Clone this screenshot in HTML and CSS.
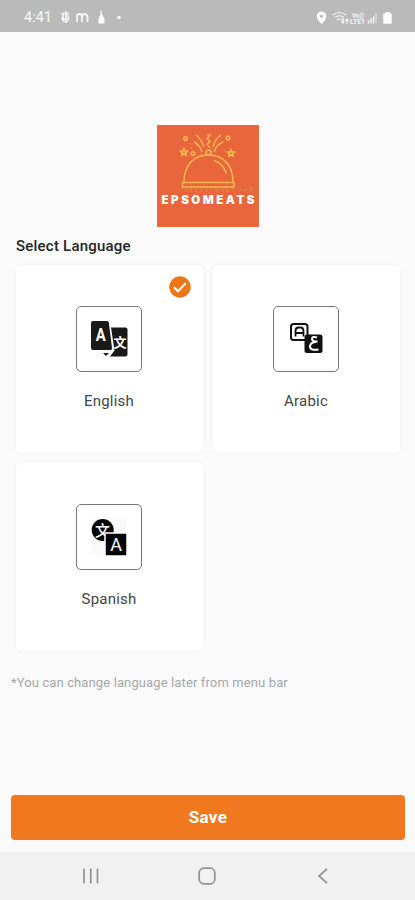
FILE: index.html
```html
<!DOCTYPE html>
<html lang="en">
<head>
<meta charset="utf-8">
<title>Select Language</title>
<link rel="stylesheet" href="styles.css">
</head>
<body>
<div class="screen">
  <header class="status">
    <span class="time">4:41</span>
    <svg class="notices" width="65" height="18" viewBox="0 0 65 18" fill="none" stroke="#f5f5f5" stroke-width="1.6">
      <path d="M1 4.500h8M3 4.500v4q0 2 3 1.500M6 2v12M6 7q3-1 2.500 2T5 13M1.500 9l3 4"/>
      <path d="M17 13V5M17 8q0-3 2.500-3T22 8v5M22 8q0-3 2.500-3T27.500 8v5" stroke-width="1.800"/>
      <path d="M40.500 2h1.500v3l2.500 5v4.500h-6V10l2-5z" fill="#fff" stroke="none"/>
      <circle cx="59" cy="8.500" r="1.700" fill="#fff" stroke="none"/>
    </svg>
    <svg class="signals" width="80" height="18" viewBox="0 0 80 18" fill="none" stroke="#f5f5f5" stroke-width="1.200">
      <path fill="#fff" fill-rule="evenodd" stroke="none" d="M6.500 2.500a4.800 4.800 0 0 0-4.800 4.800C1.700 10.800 6.500 15 6.500 15s4.800-4.200 4.800-7.700A4.800 4.800 0 0 0 6.500 2.500zm0 3.200a1.600 1.600 0 1 1 0 3.200 1.600 1.600 0 0 1 0-3.200z"/>
      <path d="M18 6q6.500-5 13 0M20 8.500q4.500-3.500 9 0M22 11q2.500-2 5 0M28 9v5M26.500 12.500l1.500 1.700 1.500-1.700M32 15v-5M30.500 11.500L32 10l1.500 1.500"/>
      <text class="tiny" x="37" y="8.500" textLength="12" lengthAdjust="spacingAndGlyphs">Vo))</text>
      <text class="tiny" x="35" y="15" textLength="15" lengthAdjust="spacingAndGlyphs">LTE1</text>
      <path d="M53.500 14.500v-3M56 14.500V9.500M58.500 14.500v-7" stroke-width="1.500"/>
      <path d="M61 14.500V4" stroke-width="1.500" stroke="#d9d9d9"/>
      <path d="M70.500 3h4v1.500h2.200v10.200h-8.400V4.500h2.200z" fill="#fff" stroke="none"/>
    </svg>
  </header>

  <main class="content">
    <svg class="logo" width="102" height="102" viewBox="0 0 102 102" fill="none" stroke="#f4b84f" stroke-width="1.500">
      <rect width="102" height="102" fill="#e9663c" stroke="none"/>
      <path d="M27 57C27 40 37 30 51.500 30S76 40 76 57M25.500 57.500h51.500v4.500h-51.500zM57 35.500q9 3 12.500 13"/>
      <circle cx="51.500" cy="27.500" r="2.500"/>
      <path d="M45 27q-2-7-8-10M47 22q-2-7-8-12M57 27q2-7 9-10M56 22q2-8 8-12"/>
      <path d="M50 10h3l-3 3.500 3 3-3 3 3 3"/>
      <path d="M27 24l1 2 2.200.2-1.600 1.600.4 2.200-2-1-2 1 .4-2.200-1.600-1.600L26 26zM74 25l1 2 2.200.2-1.600 1.600.4 2.200-2-1-2 1 .4-2.200-1.600-1.600L73 27z" stroke-width="1.800"/>
      <circle cx="28.500" cy="13.500" r="1.800"/><circle cx="36" cy="28.500" r="1.800"/><circle cx="71" cy="13" r="1.800"/>
      <path d="M34 23h1M67 26h1M33 19h.8" stroke-width="1.200"/>
      <text class="logo-sub" x="28" y="67" textLength="68">RESTAURANT APP</text>
      <text class="logo-name" x="4.500" y="79.300" textLength="93">EPSOMEATS</text>
    </svg>

    <h1 class="heading">Select Language</h1>

    <section class="grid">
      <div class="card">
        <svg class="check" width="22" height="22" viewBox="0 0 22 22"><circle cx="11" cy="11" r="10.700" fill="#ed7718"/><path d="M5 11.200l4 4 7.700-8" fill="none" stroke="#fff" stroke-width="2.200"/></svg>
        <div class="tile">
          <svg width="64" height="64" viewBox="0 0 64 64">
            <path d="M16 14h14q1.500 0 1.800 1.500L35 41q.2 2-1.500 2H16q-2 0-2-2V16q0-2 2-2z" fill="#191919"/>
            <path d="M34 20.500h14.500q2 0 2 2v25q0 2-2 2H33l4.500-6z" fill="#191919"/>
            <path d="M26 46h6l-3 3z" fill="#191919"/>
            <text class="glyph" x="23.700" y="34" font-size="18" font-weight="700" textLength="10" lengthAdjust="spacingAndGlyphs">A</text>
            <text class="glyph" x="43" y="39.500" font-size="13" font-weight="700">文</text>
          </svg>
        </div>
        <span class="label">English</span>
      </div>
      <div class="card">
        <div class="tile">
          <svg width="64" height="64" viewBox="0 0 64 64">
            <rect x="17" y="17" width="16.500" height="16" rx="2.500" fill="#fff" stroke="#111" stroke-width="2"/>
            <path d="M21.500 29.500V24q0-3.500 3-3.500h2q3 0 3 3.500v5.500M21.500 26h8" fill="none" stroke="#111" stroke-width="1.800"/>
            <rect x="30.500" y="27.500" width="18" height="18.500" rx="2.500" fill="#111"/>
            <path d="M43 30.500q-4.500-1.500-5 1.300-.2 2.700 5.500 2.700-7 .5-7.500 4.500-.2 5 8.500 3.500" fill="none" stroke="#fff" stroke-width="2"/>
          </svg>
        </div>
        <span class="label">Arabic</span>
      </div>
      <div class="card">
        <div class="tile">
          <svg width="64" height="64" viewBox="0 0 64 64">
            <path d="M15 14h35v36H15z" fill="#fafafa"/>
            <circle cx="25.700" cy="25" r="11" fill="#050505"/>
            <text class="glyph" x="25.500" y="31" font-size="15" font-weight="500">文</text>
            <rect x="28" y="28" width="22" height="23" fill="#050505" stroke="#fff" stroke-width="1.500"/>
            <text class="glyph" x="39" y="46" font-size="18">A</text>
          </svg>
        </div>
        <span class="label">Spanish</span>
      </div>
    </section>

    <p class="note">*You can change language later from menu bar</p>
    <button class="save">Save</button>
  </main>

  <nav class="navbar">
    <svg width="18" height="18" viewBox="0 0 18 18" stroke="#929292" stroke-width="1.700"><path d="M2 1.500v15M8.800 1.500v15M15.500 1.500v15"/></svg>
    <svg width="18" height="18" viewBox="0 0 18 18" fill="none" stroke="#929292" stroke-width="1.700"><rect x="1.200" y="1.200" width="15.600" height="15.600" rx="4.500"/></svg>
    <svg width="18" height="18" viewBox="0 0 18 18" fill="none" stroke="#929292" stroke-width="1.700"><path d="M13 1.800L5 9l8 7.200"/></svg>
  </nav>
</div>
</body>
</html>
```
FILE: styles.css
```css
* { box-sizing: border-box; }
body { margin: 0; font-family: Roboto, "Noto Sans CJK SC", sans-serif; }
.screen { width: 415px; height: 900px; display: flex; flex-direction: column; background: #fafafa; overflow: hidden; }
.status { height: 32px; flex: none; display: flex; align-items: center; padding: 3px 20px 0 24px; background: #bababa; color: #f8f8f8; }
.time { width: 36px; font-size: 14.5px; line-height: 18px; }
.signals { margin-left: auto; }
.tiny { font-size: 6.5px; font-weight: 700; fill: #f5f5f5; stroke: none; }
.content { flex: 1; display: flex; flex-direction: column; padding: 93px 10px 12px 11px; }
.logo { align-self: center; }
.logo-sub { font-size: 5px; fill: #d39a45; stroke: none; opacity: .8; }
.logo-name { font-size: 11.5px; font-weight: 900; fill: #fff; stroke: none; font-family: Inter, sans-serif; }
.heading { margin: 9px 0 0 5px; font-size: 15px; line-height: 20px; font-weight: 500; color: #242424; letter-spacing: .22px; }
.grid { display: grid; grid-template-columns: 187px 187px; gap: 10px; margin: 9px 0 0 5px; }
.card { position: relative; height: 187.5px; display: flex; flex-direction: column; align-items: center; padding: 41px 1px 0 0; background: #fff; border-radius: 5px; box-shadow: 0 0 6px rgba(0, 0, 0, .035); }
.check { position: absolute; top: 11px; right: 12px; }
.tile { width: 66px; height: 66px; border: 1px solid #777; border-radius: 5px; }
.tile svg { display: block; }
.glyph { fill: #fff; text-anchor: middle; }
.label { margin-top: 19px; font-size: 15px; line-height: 20px; color: #444; letter-spacing: .22px; }
.note { margin: 24px 0 0; font-size: 13px; line-height: 18px; color: #a5a8ab; letter-spacing: .12px; }
.save { margin: auto 0 0; height: 45px; border: 0; border-radius: 4px; padding: 0 0 1px; background: #f07920; color: #fff; font: 700 17px Roboto, sans-serif; letter-spacing: .3px; }
.navbar { height: 48px; flex: none; display: flex; justify-content: space-between; align-items: center; padding: 0 83px 0 82px; background: #f1f1f1; }
```
